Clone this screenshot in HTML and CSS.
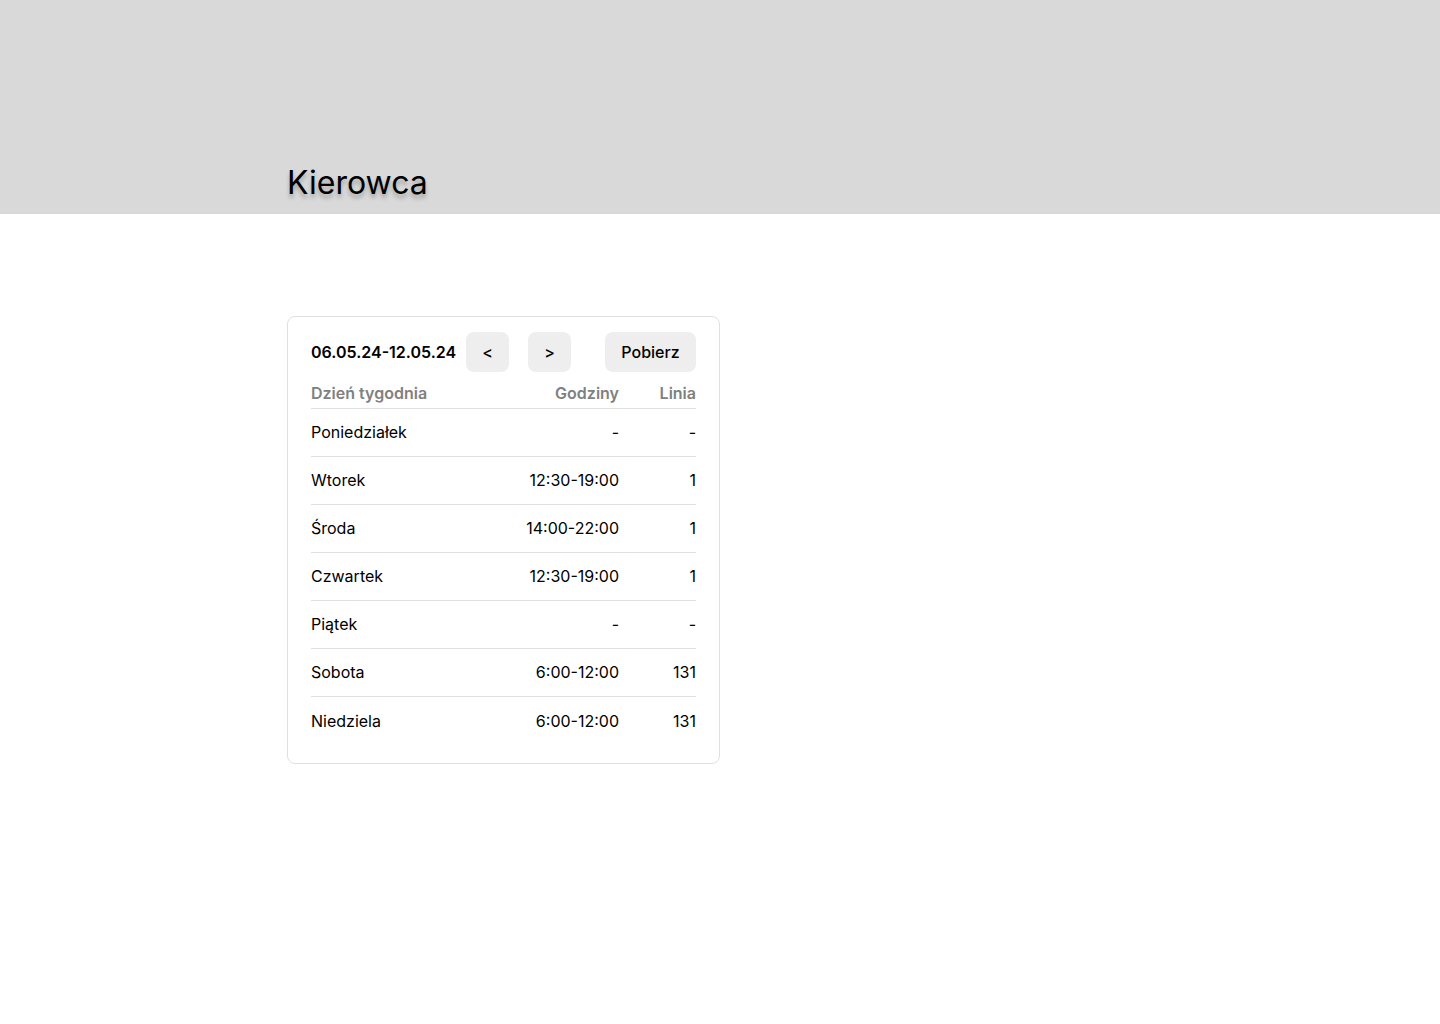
FILE: index.html
```html
<!DOCTYPE html>
<html lang="pl">
<head>
<meta charset="utf-8">
<title>Kierowca</title>
<link rel="stylesheet" href="styles.css">
</head>
<body>
<header class="topbar">
  <div class="wrap">
    <h1 class="title">Kierowca</h1>
  </div>
</header>
<main class="wrap main">
  <section class="card">
    <div class="toolbar">
      <span class="range">06.05.24-12.05.24</span>
      <button class="btn btn-prev">&lt;</button>
      <button class="btn btn-next">&gt;</button>
      <button class="btn btn-download">Pobierz</button>
    </div>
    <div class="row head">
      <span class="c-day">Dzień tygodnia</span>
      <span class="c-hours">Godziny</span>
      <span class="c-line">Linia</span>
    </div>
    <div class="row"><span class="c-day">Poniedziałek</span><span class="c-hours">-</span><span class="c-line">-</span></div>
    <div class="row"><span class="c-day">Wtorek</span><span class="c-hours">12:30-19:00</span><span class="c-line">1</span></div>
    <div class="row"><span class="c-day">Środa</span><span class="c-hours">14:00-22:00</span><span class="c-line">1</span></div>
    <div class="row"><span class="c-day">Czwartek</span><span class="c-hours">12:30-19:00</span><span class="c-line">1</span></div>
    <div class="row"><span class="c-day">Piątek</span><span class="c-hours">-</span><span class="c-line">-</span></div>
    <div class="row"><span class="c-day">Sobota</span><span class="c-hours">6:00-12:00</span><span class="c-line">131</span></div>
    <div class="row last"><span class="c-day">Niedziela</span><span class="c-hours">6:00-12:00</span><span class="c-line">131</span></div>
  </section>
</main>
</body>
</html>
```

FILE: styles.css
```css
* { box-sizing: border-box; }

body {
  margin: 0;
  font-family: Inter, "Noto Sans", sans-serif;
  color: #000;
  background: #fff;
}

.wrap {
  width: 866px;
  margin: 0 auto;
}

.topbar {
  background: #d9d9d9;
  height: 214px;
  display: flex;
  align-items: flex-end;
  padding-bottom: 12px;
}

.title {
  margin: 0;
  font-size: 32px;
  font-weight: 400;
  line-height: 38px;
  text-shadow: 0 4px 4px rgba(0, 0, 0, 0.25);
}

.main {
  padding-top: 102px;
}

.card {
  width: 433px;
  border: 1px solid #e0e0e0;
  border-radius: 8px;
  padding: 15px 23px 19px;
}

.toolbar {
  display: flex;
  align-items: center;
  height: 40px;
}

.range {
  font-size: 16px;
  font-weight: 600;
  width: 144px;
  white-space: nowrap;
}

.btn {
  height: 40px;
  border: 0;
  border-radius: 8px;
  background: #eeeeee;
  font-family: inherit;
  font-size: 16px;
  font-weight: 500;
  color: #000;
  padding: 0;
}

.btn-prev { width: 43px; margin-left: 11px; }
.btn-next { width: 43px; margin-left: 19px; }
.btn-download { width: 91px; margin-left: auto; }

.row {
  display: flex;
  align-items: center;
  height: 48px;
  border-bottom: 1px solid #e0e0e0;
  font-size: 16px;
  line-height: 20px;
  padding-bottom: 1px;
}

.row.head {
  height: 37px;
  padding-top: 5px;
  padding-bottom: 0;
  color: #808080;
  font-weight: 600;
}

.row.last {
  border-bottom: 0;
  height: 47px;
  padding-bottom: 0;
}

.c-day { flex: 1; }
.c-hours { width: 150px; text-align: right; }
.c-line { width: 77px; text-align: right; }
```
